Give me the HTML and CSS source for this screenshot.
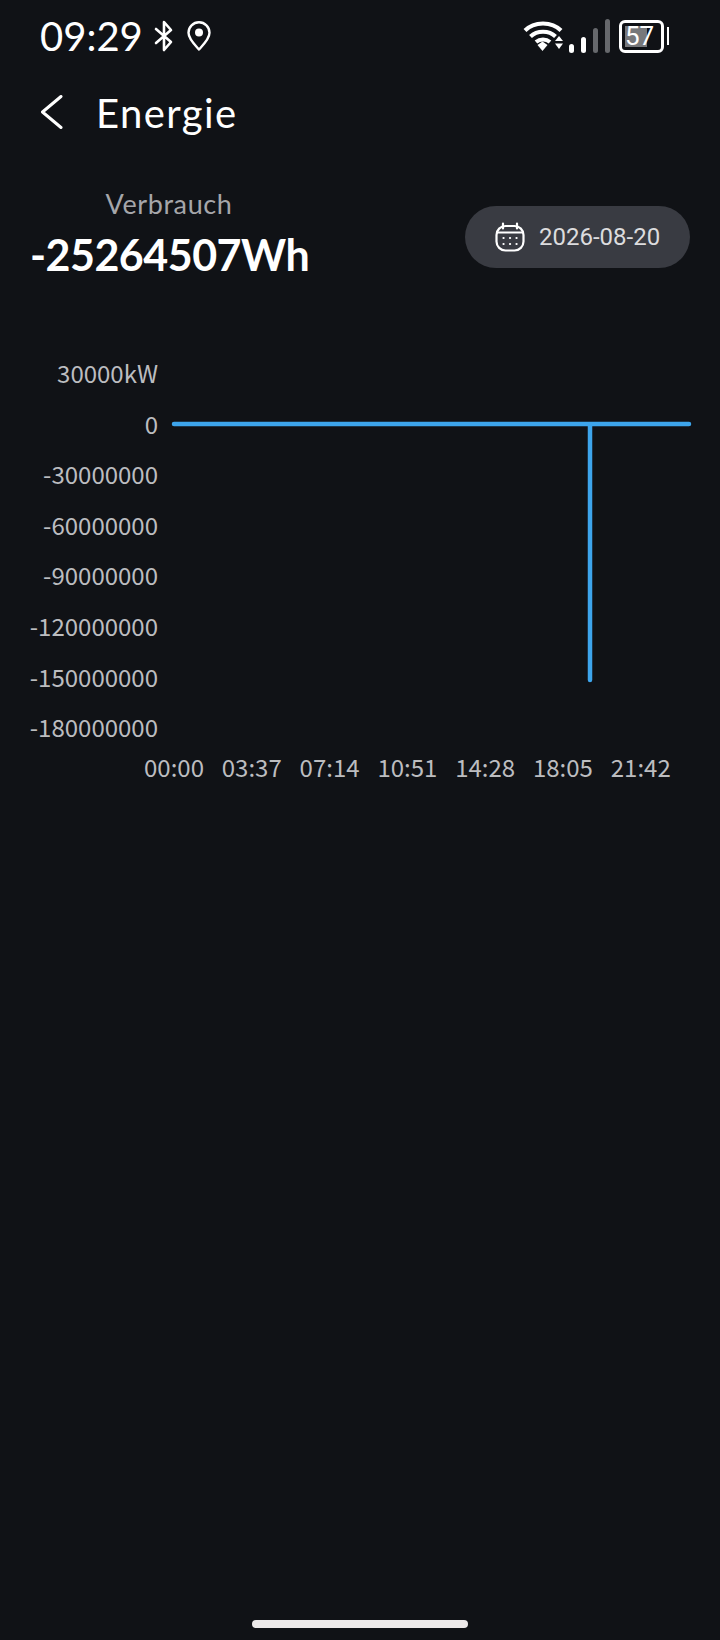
FILE: index.html
```html
<!DOCTYPE html>
<html lang="de">
  <head>
    <meta charset="UTF-8" />
    <meta name="viewport" content="width=device-width, initial-scale=1.0" />
    <title>Energie</title>
    <link rel="stylesheet" href="styles.css">
  </head>
  <body>
    <div class="screen">
      <div class="status-bar">
        <div class="status-left">
          <span class="clock">09:29</span>
          <svg class="icon-bt" viewBox="0 0 20 32" fill="none" stroke="#fff" stroke-width="2.6" stroke-linecap="round" stroke-linejoin="round">
            <path d="M2 9 L17 22 L10 30 V2 L17 10 L2 23" />
          </svg>
          <svg class="icon-pin" viewBox="0 0 24 30" fill="none" stroke="#fff" stroke-width="2.4" stroke-linejoin="round">
            <path d="M12 28.5 C8 24 1.5 18 1.5 11.8 A10.5 10.5 0 0 1 22.5 11.8 C22.5 18 16 24 12 28.5 Z" />
            <circle cx="12" cy="11.5" r="4" fill="#fff" stroke="none" />
          </svg>
        </div>
        <div class="status-right">
          <svg class="icon-wifi" viewBox="0 0 42 32" fill="none" stroke="#fff" stroke-width="4">
            <path d="M2 10.5 C11 1 29 1 38 10.5" />
            <path d="M7.5 16.5 C14 10 26 10 32.5 16.5" />
            <path d="M13 22 C17 18.5 23 18.5 27 22" />
            <path d="M14.5 25 L19.5 21.5 L24.5 25 L19.5 31 Z" fill="#fff" stroke="none" />
            <path d="M32 21 L36 16 L40 21 Z" fill="#fff" stroke="none" />
            <path d="M32 23.5 H40 L36 29 Z" fill="#fff" stroke="none" />
          </svg>
          <div class="signal">
            <span class="bar bar-1"></span>
            <span class="bar bar-2"></span>
            <span class="bar bar-3 off"></span>
            <span class="bar bar-4 off"></span>
          </div>
          <div class="battery">
            <div class="battery-body">
              <span class="battery-fill"></span>
              <span class="battery-level">57</span>
            </div>
            <span class="battery-nub"></span>
          </div>
        </div>
      </div>

      <header class="title-bar">
        <svg class="icon-back" viewBox="0 0 22 34" fill="none" stroke="#fff" stroke-width="3" stroke-linecap="round" stroke-linejoin="round">
          <path d="M20 1.5 L1.5 17 L20 32.5" />
        </svg>
        <h1>Energie</h1>
      </header>

      <section class="summary">
        <div class="usage">
          <div class="usage-label">Verbrauch</div>
          <div class="usage-value">-25264507Wh</div>
        </div>
        <button class="date-pill">
          <svg class="icon-calendar" viewBox="0 0 30 30" fill="none" stroke="#fff" stroke-width="2.2" stroke-linecap="round">
            <rect x="1.5" y="4" width="27" height="24.5" rx="9" />
            <path d="M8 1.5 V6.5 M22 1.5 V6.5 M2 10.5 H28" />
            <path d="M8.5 16 h.1 M15 16 h.1 M21.5 16 h.1 M8.5 22 h.1 M15 22 h.1 M21.5 22 h.1" />
          </svg>
          <span>2026-08-20</span>
        </button>
      </section>

      <section class="chart">
        <div class="y-axis">
          <span>30000kW</span>
          <span>0</span>
          <span>-30000000</span>
          <span>-60000000</span>
          <span>-90000000</span>
          <span>-120000000</span>
          <span>-150000000</span>
          <span>-180000000</span>
        </div>
        <svg class="plot" viewBox="0 0 562 405" fill="none" stroke="#3da5ec" stroke-width="4.5" stroke-linecap="round" stroke-linejoin="round">
          <path d="M16 76 H432 V332 V76 H531" />
        </svg>
        <div class="x-axis">
          <span>00:00</span>
          <span>03:37</span>
          <span>07:14</span>
          <span>10:51</span>
          <span>14:28</span>
          <span>18:05</span>
          <span>21:42</span>
        </div>
      </section>

      <div class="home-indicator"></div>
    </div>
  </body>
</html>
```

FILE: styles.css
```css
* {
  box-sizing: border-box;
}

body {
  margin: 0;
  background: #101216;
  color: #fff;
  font-family: "Lato", sans-serif;
}

.screen {
  height: 1640px;
  display: flex;
  flex-direction: column;
  overflow: hidden;
}

/* status bar */
.status-bar {
  height: 72px;
  padding: 0 51px 0 40px;
  display: flex;
  justify-content: space-between;
  align-items: center;
}

.status-left,
.status-right {
  display: flex;
  align-items: center;
}

.clock {
  font-size: 40px;
  line-height: 72px;
  width: 114px;
}

.icon-bt {
  width: 20px;
  height: 32px;
}

.icon-pin {
  width: 24px;
  height: 30px;
  margin-left: 13px;
}

.icon-wifi {
  width: 42px;
  height: 32px;
}

.signal {
  display: flex;
  align-items: flex-end;
  gap: 6.5px;
  height: 34px;
  margin-left: 4px;
}

.bar {
  width: 5.5px;
  border-radius: 3px;
  background: #fff;
}

.bar.off {
  background: #66686c;
}

.bar-1 {
  height: 9px;
}

.bar-2 {
  height: 16px;
}

.bar-3 {
  height: 25px;
}

.bar-4 {
  height: 34px;
}

.battery {
  display: flex;
  align-items: center;
  margin-left: 9px;
}

.battery-body {
  position: relative;
  width: 45px;
  height: 33px;
  border: 3px solid #fff;
  border-radius: 6px;
}

.battery-fill {
  position: absolute;
  left: 3px;
  top: 3px;
  bottom: 3px;
  width: 22px;
  background: #77787b;
}

.battery-level {
  position: absolute;
  left: 3px;
  top: 0;
  font-family: "Roboto", sans-serif;
  font-size: 26px;
  line-height: 27px;
}

.battery-nub {
  width: 2px;
  height: 18px;
  margin-left: 3px;
  background: #fff;
}

/* title */
.title-bar {
  height: 80px;
  padding-left: 41px;
  display: flex;
  align-items: center;
}

.icon-back {
  width: 22px;
  height: 34px;
}

h1 {
  margin: 2px 0 0 33px;
  font-size: 40px;
  font-weight: 400;
  letter-spacing: 1.4px;
}

/* usage + date */
.summary {
  height: 156px;
  padding: 34px 30px 0 30px;
  display: flex;
  justify-content: space-between;
  align-items: flex-start;
}

.usage {
  width: 278px;
  text-align: center;
}

.usage-label {
  color: #a5a6aa;
  font-size: 27px;
  letter-spacing: 0.6px;
  line-height: 36px;
}

.usage-value {
  margin-top: 8px;
  font-size: 43px;
  font-weight: 700;
  letter-spacing: -0.5px;
  line-height: 50px;
}

.date-pill {
  width: 225px;
  height: 62px;
  margin-top: 20px;
  padding: 0 0 0 30px;
  display: flex;
  align-items: center;
  gap: 14px;
  border: 0;
  border-radius: 31px;
  background: #393b42;
  color: #dcdcde;
  font-family: "Roboto", sans-serif;
  font-size: 24px;
}

.icon-calendar {
  width: 30px;
  height: 30px;
}

/* chart */
.chart {
  padding-top: 40px;
  display: grid;
  grid-template-columns: 158px 562px;
  color: #bcbdc0;
  font-family: "Noto Sans CJK SC", sans-serif;
  font-size: 24px;
}

.y-axis {
  display: flex;
  flex-direction: column;
  align-items: flex-end;
}

.y-axis span {
  height: 50.6px;
  line-height: 50.6px;
}

.plot {
  width: 562px;
  height: 405px;
}

.x-axis {
  grid-column: 1 / -1;
  padding-left: 144px;
  display: grid;
  grid-template-columns: repeat(7, 77.8px);
  line-height: 28px;
}

/* nav gesture bar */
.home-indicator {
  width: 216px;
  height: 8px;
  margin: auto auto 12px;
  border-radius: 4px;
  background: #ece9e9;
}
```
